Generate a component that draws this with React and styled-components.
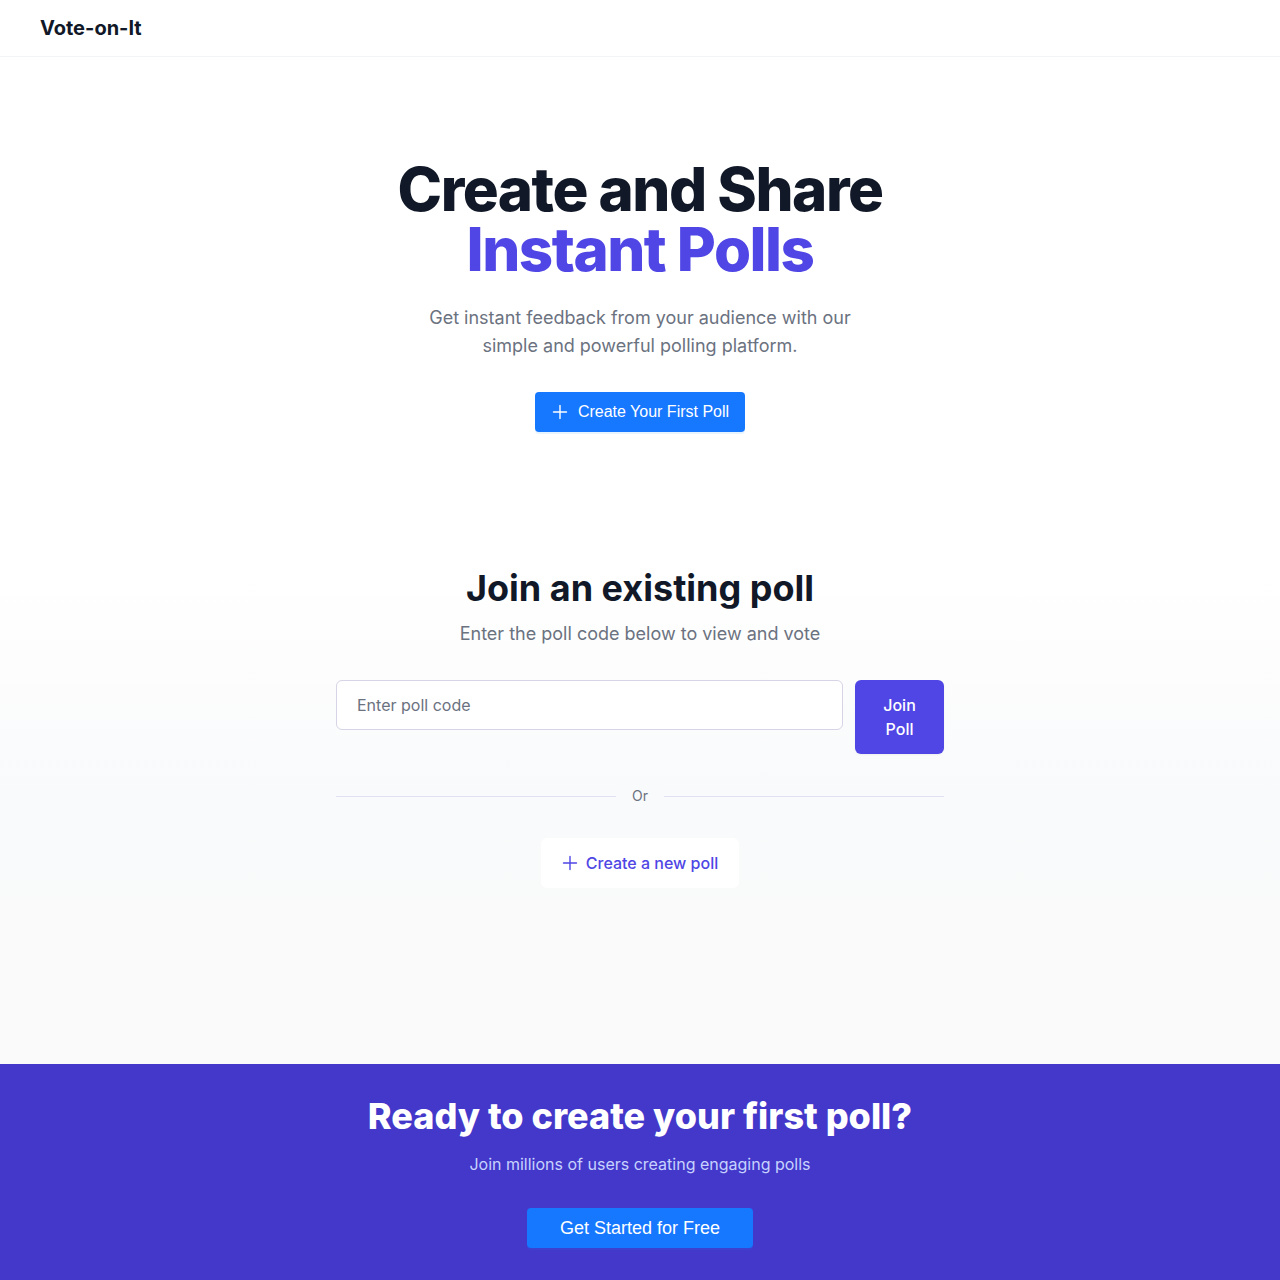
import React from "react";
import styled, { createGlobalStyle } from "styled-components";

const GlobalStyle = createGlobalStyle`
  * { box-sizing: border-box; }
  body {
    margin: 0;
    font-family: Inter, "Noto Sans", sans-serif;
    background: #ffffff;
    color: #111827;
  }
`;

const PlusIcon = ({ size = 16 }) => (
  <svg width={size} height={size} viewBox="0 0 16 16" fill="none">
    <path d="M8 1.5v13M1.5 8h13" stroke="currentColor" strokeWidth="1.4" strokeLinecap="round" />
  </svg>
);

export default function App() {
  return (
    <>
      <GlobalStyle />
      <Header>
        <Logo>Vote-on-It</Logo>
      </Header>

      <Hero>
        <Title>
          Create and Share
          <Accent>Instant Polls</Accent>
        </Title>
        <Lead>
          Get instant feedback from your audience with our simple and powerful polling platform.
        </Lead>
        <PrimaryButton>
          <PlusIcon />
          Create Your First Poll
        </PrimaryButton>
      </Hero>

      <JoinSection>
        <JoinInner>
          <SectionTitle>Join an existing poll</SectionTitle>
          <SectionText>Enter the poll code below to view and vote</SectionText>
          <JoinRow>
            <CodeInput placeholder="Enter poll code" />
            <JoinButton>Join Poll</JoinButton>
          </JoinRow>
          <Divider>
            <span>Or</span>
          </Divider>
          <GhostButton>
            <PlusIcon />
            Create a new poll
          </GhostButton>
        </JoinInner>
      </JoinSection>

      <Cta>
        <CtaTitle>Ready to create your first poll?</CtaTitle>
        <CtaText>Join millions of users creating engaging polls</CtaText>
        <PrimaryButton $large>Get Started for Free</PrimaryButton>
      </Cta>
    </>
  );
}

const Header = styled.header`
  height: 57px;
  display: flex;
  align-items: center;
  padding: 0 40px;
  border-bottom: 1px solid #f3f4f6;
  background: #fff;
`;

const Logo = styled.div`
  font-size: 20px;
  font-weight: 700;
  color: #111827;
`;

const Hero = styled.section`
  display: flex;
  flex-direction: column;
  align-items: center;
  text-align: center;
  padding: 102px 24px 138px;
`;

const Title = styled.h1`
  margin: 0;
  font-size: 60px;
  line-height: 60px;
  font-weight: 800;
  letter-spacing: -1.5px;
  color: #111827;
`;

const Accent = styled.span`
  display: block;
  color: #4f46e5;
`;

const Lead = styled.p`
  margin: 25px 0 0;
  max-width: 440px;
  font-size: 18px;
  line-height: 28px;
  color: #6b7280;
`;

const PrimaryButton = styled.button`
  margin-top: ${(p) => (p.$large ? "0" : "32px")};
  height: 40px;
  display: inline-flex;
  align-items: center;
  gap: 10px;
  padding: ${(p) => (p.$large ? "0 33px" : "0 16px 0 17px")};
  border: none;
  border-radius: 4px;
  background: #1677ff;
  color: #fff;
  font-family: "Liberation Sans", Arial, sans-serif;
  font-size: ${(p) => (p.$large ? "18px" : "16px")};
  cursor: pointer;
  box-shadow: 0 2px 0 rgba(5, 145, 255, 0.1);
`;

const JoinSection = styled.section`
  background: linear-gradient(to bottom, #ffffff, #f9fafb 45%, #fafafa);
  padding: 0 24px 176px;
`;

const JoinInner = styled.div`
  max-width: 608px;
  margin: 0 auto;
  display: flex;
  flex-direction: column;
  align-items: center;
  text-align: center;
`;

const SectionTitle = styled.h2`
  margin: 0;
  font-size: 36px;
  line-height: 36px;
  font-weight: 700;
  color: #111827;
`;

const SectionText = styled.p`
  margin: 14px 0 0;
  font-size: 18px;
  line-height: 28px;
  color: #6b7280;
`;

const JoinRow = styled.div`
  margin-top: 32px;
  width: 100%;
  display: flex;
  align-items: flex-start;
  gap: 12px;
`;

const CodeInput = styled.input`
  flex: 1;
  height: 50px;
  padding: 0 20px;
  border: 1px solid #d6d4e6;
  border-radius: 6px;
  background: #fff;
  font-family: Inter, sans-serif;
  font-size: 16px;
  color: #111827;
  outline: none;
  &::placeholder {
    color: #6b7280;
  }
`;

const JoinButton = styled.button`
  width: 89px;
  padding: 13px 20px;
  border: none;
  border-radius: 6px;
  background: #4f46e5;
  color: #fff;
  font-family: Inter, sans-serif;
  font-size: 16px;
  font-weight: 500;
  line-height: 24px;
  box-shadow: 0 1px 2px rgba(0, 0, 0, 0.05);
  cursor: pointer;
`;

const Divider = styled.div`
  margin-top: 30px;
  width: 100%;
  display: flex;
  align-items: center;
  font-family: Inter, sans-serif;
  font-size: 14px;
  color: #6b7280;
  &::before,
  &::after {
    content: "";
    flex: 1;
    height: 1px;
    background: #e2e0f3;
  }
  span {
    padding: 2px 16px;
    line-height: 20px;
    background: #f9fafb;
  }
`;

const GhostButton = styled.button`
  margin-top: 30px;
  height: 50px;
  display: inline-flex;
  align-items: center;
  gap: 8px;
  padding: 0 21px;
  border: none;
  border-radius: 6px;
  background: #fff;
  color: #4f46e5;
  font-family: Inter, sans-serif;
  font-size: 16px;
  font-weight: 500;
  cursor: pointer;
`;

const Cta = styled.section`
  background: #4338ca;
  padding: 32px 24px 48px;
  display: flex;
  flex-direction: column;
  align-items: center;
  text-align: center;
`;

const CtaTitle = styled.h2`
  margin: 0;
  font-size: 36px;
  line-height: 40px;
  font-weight: 800;
  color: #fff;
`;

const CtaText = styled.p`
  margin: 16px 0 32px;
  font-size: 16px;
  line-height: 24px;
  color: #c7d2fe;
`;
